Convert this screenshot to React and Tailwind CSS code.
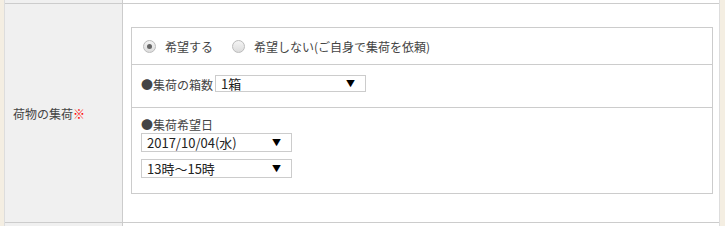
const FONT = { fontFamily: '"Noto Sans CJK JP", "Liberation Sans", sans-serif' }

function Radio({ checked, label }) {
  return (
    <label className="flex items-center gap-[9px]">
      <span className="w-[13px] h-[13px] rounded-full border border-[#bbb] bg-gradient-to-b from-[#f4f4f4] to-[#dcdcdc] flex items-center justify-center">
        {checked && <span className="w-[5px] h-[5px] rounded-full bg-[#666]" />}
      </span>
      <span>{label}</span>
    </label>
  )
}

function FakeSelect({ value, className = '' }) {
  return (
    <div className={`flex items-center justify-between border border-[#ccc] bg-white pl-[5px] pr-[10px] text-[13px] text-[#222] ${className}`}>
      <span>{value}</span>
      <span className="text-[9px] text-black">▼</span>
    </div>
  )
}

export default function App() {
  return (
    <div className="w-[725px] h-[226px] bg-[#f4eee2] flex text-[12px] text-[#444] overflow-hidden" style={FONT}>
      <div className="w-[4px]" />
      <div className="w-[716px] flex flex-col border-l border-[#ddd] border-r">
        {/* 前の行の残り */}
        <div className="h-[3px] flex">
          <div className="w-[118px] bg-[#f0f0f0] border-r border-[#ccc]" />
          <div className="flex-1 bg-white" />
        </div>
        <div className="h-[220px] flex border-y border-[#ccc]">
          <div className="w-[118px] bg-[#f0f0f0] border-r border-[#ccc] flex items-center pl-[8px] pt-[2px]">
            荷物の集荷<span className="text-[#f00]">※</span>
          </div>
          <div className="flex-1 bg-white pl-[8px] pr-[6px] pt-[23px]">
            <div className="border border-[#ccc]">
              <div className="h-[37px] flex items-center gap-[19px] pl-[11px] pt-[1px] border-b border-[#ccc]">
                <Radio checked label="希望する" />
                <Radio label="希望しない(ご自身で集荷を依頼)" />
              </div>
              <div className="h-[43px] flex items-start pl-[9px] pt-[10px] border-b border-[#ccc]">
                <span className="mt-[1px] mr-[2px]">●集荷の箱数</span>
                <FakeSelect value="1箱" className="w-[151px] h-[17px]" />
              </div>
              <div className="h-[85px] pl-[9px] pt-[8px]">
                <div className="leading-[18px]">●集荷希望日</div>
                <FakeSelect value="2017/10/04(水)" className="w-[151px] h-[19px] mt-[-1px]" />
                <FakeSelect value="13時～15時" className="w-[151px] h-[19px] mt-[7px]" />
              </div>
            </div>
          </div>
        </div>
        <div className="flex-1 flex">
          <div className="w-[118px] bg-[#f0f0f0] border-r border-[#ccc]" />
          <div className="flex-1 bg-white" />
        </div>
      </div>
    </div>
  )
}
